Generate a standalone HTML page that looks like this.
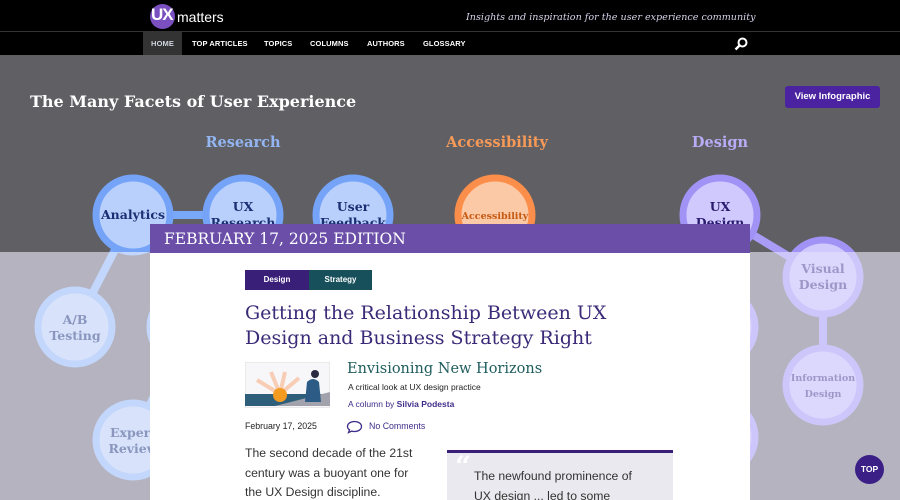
<!DOCTYPE html>
<html><head><meta charset="utf-8"><style>
*{margin:0;padding:0;box-sizing:border-box}
html,body{width:900px;height:500px;overflow:hidden}
body{background:#b4b3bf;font-family:"Liberation Sans",sans-serif;position:relative}
.top{position:absolute;left:0;top:0;width:900px;height:31px;background:#000}
.nav{position:absolute;left:0;top:31px;width:900px;height:24px;background:#000;border-top:1px solid #333}
.nav span{position:absolute;top:0;height:23px;line-height:23px;font-size:7.5px;font-weight:bold;color:#fff;letter-spacing:.1px}
svg.bg{position:absolute;left:0;top:55px}
.card{position:absolute;left:150px;top:224px;width:600px;height:276px;background:#fff;overflow:hidden}
.ch{height:29px;background:#6a4ea8;color:#fff;font-family:"DejaVu Serif",serif;font-size:15.5px;line-height:30px;padding-left:14px}
.abs{position:absolute}
</style></head><body>
<svg class="bg" width="900" height="445" viewBox="0 55 900 445">
<defs><clipPath id="lo"><rect x="0" y="252" width="900" height="248"/></clipPath></defs>
<rect x="0" y="55" width="900" height="197" fill="#5f5f64"/>
<g stroke="#7aa8f8" stroke-width="8"><line x1="133" y1="215" x2="243" y2="215"/><line x1="133" y1="215" x2="75" y2="327"/></g>
<g stroke="#a99cf7" stroke-width="8"><line x1="720" y1="215" x2="823" y2="277"/></g>
<g fill="#b9d0fd" stroke="#74a3f7" stroke-width="7">
<circle cx="133" cy="215" r="37"/><circle cx="243" cy="215" r="37"/><circle cx="353" cy="215" r="37"/></g>
<circle cx="495" cy="215" r="37" fill="#fcc9a6" stroke="#fb8e4a" stroke-width="7"/>
<g fill="#cfc9fd" stroke="#a193f6" stroke-width="7">
<circle cx="720" cy="215" r="37"/><circle cx="823" cy="277" r="37"/></g>
<g font-family="DejaVu Serif,serif" font-weight="bold" text-anchor="middle">
<text x="243" y="147" font-size="14.5" fill="#93b6f2">Research</text>
<text x="497" y="147" font-size="14.5" fill="#f79a58">Accessibility</text>
<text x="720" y="147" font-size="14.5" fill="#b7acf5">Design</text>
<g fill="#1a2f72" font-size="12.5"><text x="133" y="219">Analytics</text><text x="243" y="211">UX</text><text x="243" y="227">Research</text><text x="353" y="211">User</text><text x="353" y="227">Feedback</text></g>
<text x="495" y="219" font-size="9.5" fill="#c45a14">Accessibility</text>
<g fill="#2b1a6e" font-size="12.5"><text x="720" y="211">UX</text><text x="720" y="227">Design</text></g>
</g>
<rect x="0" y="252" width="900" height="248" fill="#b4b3bf"/>
<g clip-path="url(#lo)">
<g stroke="#c3d6fb" stroke-width="8"><line x1="133" y1="215" x2="75" y2="327"/><line x1="133" y1="440" x2="187" y2="327"/></g>
<g stroke="#cdc6fb" stroke-width="8"><line x1="720" y1="215" x2="823" y2="277"/><line x1="823" y1="277" x2="823" y2="385"/></g>
<g fill="#d8e3fb" stroke="#c3d6fb" stroke-width="7">
<circle cx="133" cy="215" r="37"/><circle cx="75" cy="327" r="37"/><circle cx="187" cy="327" r="37"/><circle cx="133" cy="440" r="37"/></g>
<g fill="#dcd8fd" stroke="#cdc6fb" stroke-width="7">
<circle cx="720" cy="215" r="37"/><circle cx="823" cy="277" r="37"/><circle cx="823" cy="385" r="37"/><circle cx="718" cy="327" r="37"/><circle cx="718" cy="437" r="37"/></g>
<g font-family="DejaVu Serif,serif" font-weight="bold" text-anchor="middle">
<g fill="#8a96be" font-size="12.5"><text x="75" y="324">A/B</text><text x="75" y="340">Testing</text><text x="133" y="437">Expert</text><text x="133" y="453">Review</text></g>
<g fill="#9d97c8" font-size="12.5"><text x="823" y="273">Visual</text><text x="823" y="289">Design</text></g>
<g fill="#9d97c8" font-size="9.5"><text x="823" y="381">Information</text><text x="823" y="397">Design</text></g>
</g></g>
<text x="30" y="107" font-family="DejaVu Serif,serif" font-weight="bold" font-size="16" fill="#fff">The Many Facets of User Experience</text>
</svg>
<div class="top">
<div class="abs" style="left:150px;top:4px;width:25px;height:25px;border-radius:50%;background:#7a4fc0"></div>
<div class="abs" style="left:151px;top:5px;font-size:17px;font-weight:bold;color:#fff;letter-spacing:-1px">UX</div>
<div class="abs" style="left:177px;top:9px;font-size:14px;color:#fff">matters</div>
<div class="abs" style="left:466px;top:12px;font-family:'DejaVu Serif',serif;font-style:italic;font-size:9.6px;color:#d9d3ea">Insights and inspiration for the user experience community</div>
</div>
<div class="nav">
<span style="left:143px;width:39px;background:#333;text-align:center;color:#cfd3dc">HOME</span>
<span style="left:192px">TOP ARTICLES</span><span style="left:264px">TOPICS</span><span style="left:310px">COLUMNS</span><span style="left:367px">AUTHORS</span><span style="left:423px">GLOSSARY</span>
<svg class="abs" style="left:734px;top:5px" width="14" height="14"><circle cx="8.5" cy="5.5" r="4" fill="none" stroke="#fff" stroke-width="2"/><line x1="5.5" y1="8.5" x2="1.5" y2="12.5" stroke="#fff" stroke-width="2.4"/></svg>
</div>
<div class="abs" style="left:785px;top:86px;width:95px;height:22px;background:#4b22a0;border-radius:3px;color:#fff;font-size:9.5px;font-weight:bold;text-align:center;line-height:22px">View Infographic</div>
<div class="card">
<div class="ch">FEBRUARY 17, 2025 EDITION</div>
<div class="abs" style="left:95px;top:46px;width:64px;height:20px;background:#3a1f78;color:#fff;font-size:8px;font-weight:bold;text-align:center;line-height:20px">Design</div>
<div class="abs" style="left:159px;top:46px;width:63px;height:20px;background:#17505a;color:#fff;font-size:8px;font-weight:bold;text-align:center;line-height:20px">Strategy</div>
<div class="abs" style="left:95px;top:77px;width:420px;font-family:'DejaVu Serif',serif;font-size:19px;line-height:25px;color:#3b2a78">Getting the Relationship Between UX Design and Business Strategy Right</div>
<svg class="abs" style="left:95px;top:138px" width="85" height="46"><rect width="85" height="46" fill="#f7f7f9" stroke="#ddd"/><g stroke="#f8cdb6" stroke-width="4"><line x1="35" y1="32" x2="12" y2="18"/><line x1="35" y1="32" x2="26" y2="10"/><line x1="35" y1="32" x2="40" y2="10"/><line x1="35" y1="32" x2="54" y2="16"/></g><rect x="0" y="32" width="85" height="12" fill="#2e5f7a"/><circle cx="35" cy="33" r="7" fill="#f39a20"/><polygon points="30,44 85,30 85,44" fill="#a2a2ad"/><path d="M62 20 q6-6 12 0 l2 20 h-16z" fill="#2c5b85"/><circle cx="70" cy="12" r="4" fill="#2a2a40"/></svg>
<div class="abs" style="left:197px;top:137px;font-family:'DejaVu Serif',serif;font-size:14.5px;color:#1f5c5c">Envisioning New Horizons</div>
<div class="abs" style="left:198px;top:158px;font-size:8.5px;color:#222">A critical look at UX design practice</div>
<div class="abs" style="left:198px;top:175px;font-size:8.5px;color:#3f2d8a">A column by <b>Silvia Podesta</b></div>
<div class="abs" style="left:95px;top:197px;font-size:8.8px;color:#222">February 17, 2025</div>
<svg class="abs" style="left:196px;top:196px" width="17" height="14"><path d="M8.5 1.5c4 0 7 2.2 7 5s-3 5-7 5c-1 0-2-.1-2.8-.4L2.5 12.5l1-2.8C2 8.9 1.5 7.8 1.5 6.5c0-2.8 3-5 7-5z" fill="none" stroke="#3f2d8a" stroke-width="1.3"/></svg>
<div class="abs" style="left:219px;top:197px;font-size:8.8px;color:#3f2d8a">No Comments</div>
<div class="abs" style="left:95px;top:220px;width:172px;font-size:12.2px;line-height:19.5px;color:#333">The second decade of the 21st century was a buoyant one for the UX Design discipline.</div>
<div class="abs" style="left:297px;top:226px;width:226px;height:60px;background:#e9e9ef;border-top:3px solid #3a1f78"></div>
<div class="abs" style="left:305px;top:226px;font-family:'DejaVu Serif',serif;font-size:28px;font-weight:bold;color:#fff">“</div>
<div class="abs" style="left:324px;top:243px;width:178px;font-size:12.2px;line-height:19.5px;color:#333">The newfound prominence of UX design ... led to some</div>
</div>
<div class="abs" style="left:855px;top:455px;width:29px;height:29px;border-radius:50%;background:#3b1f86;color:#fff;font-size:8.5px;font-weight:bold;text-align:center;line-height:29px">TOP</div>
</body></html>
